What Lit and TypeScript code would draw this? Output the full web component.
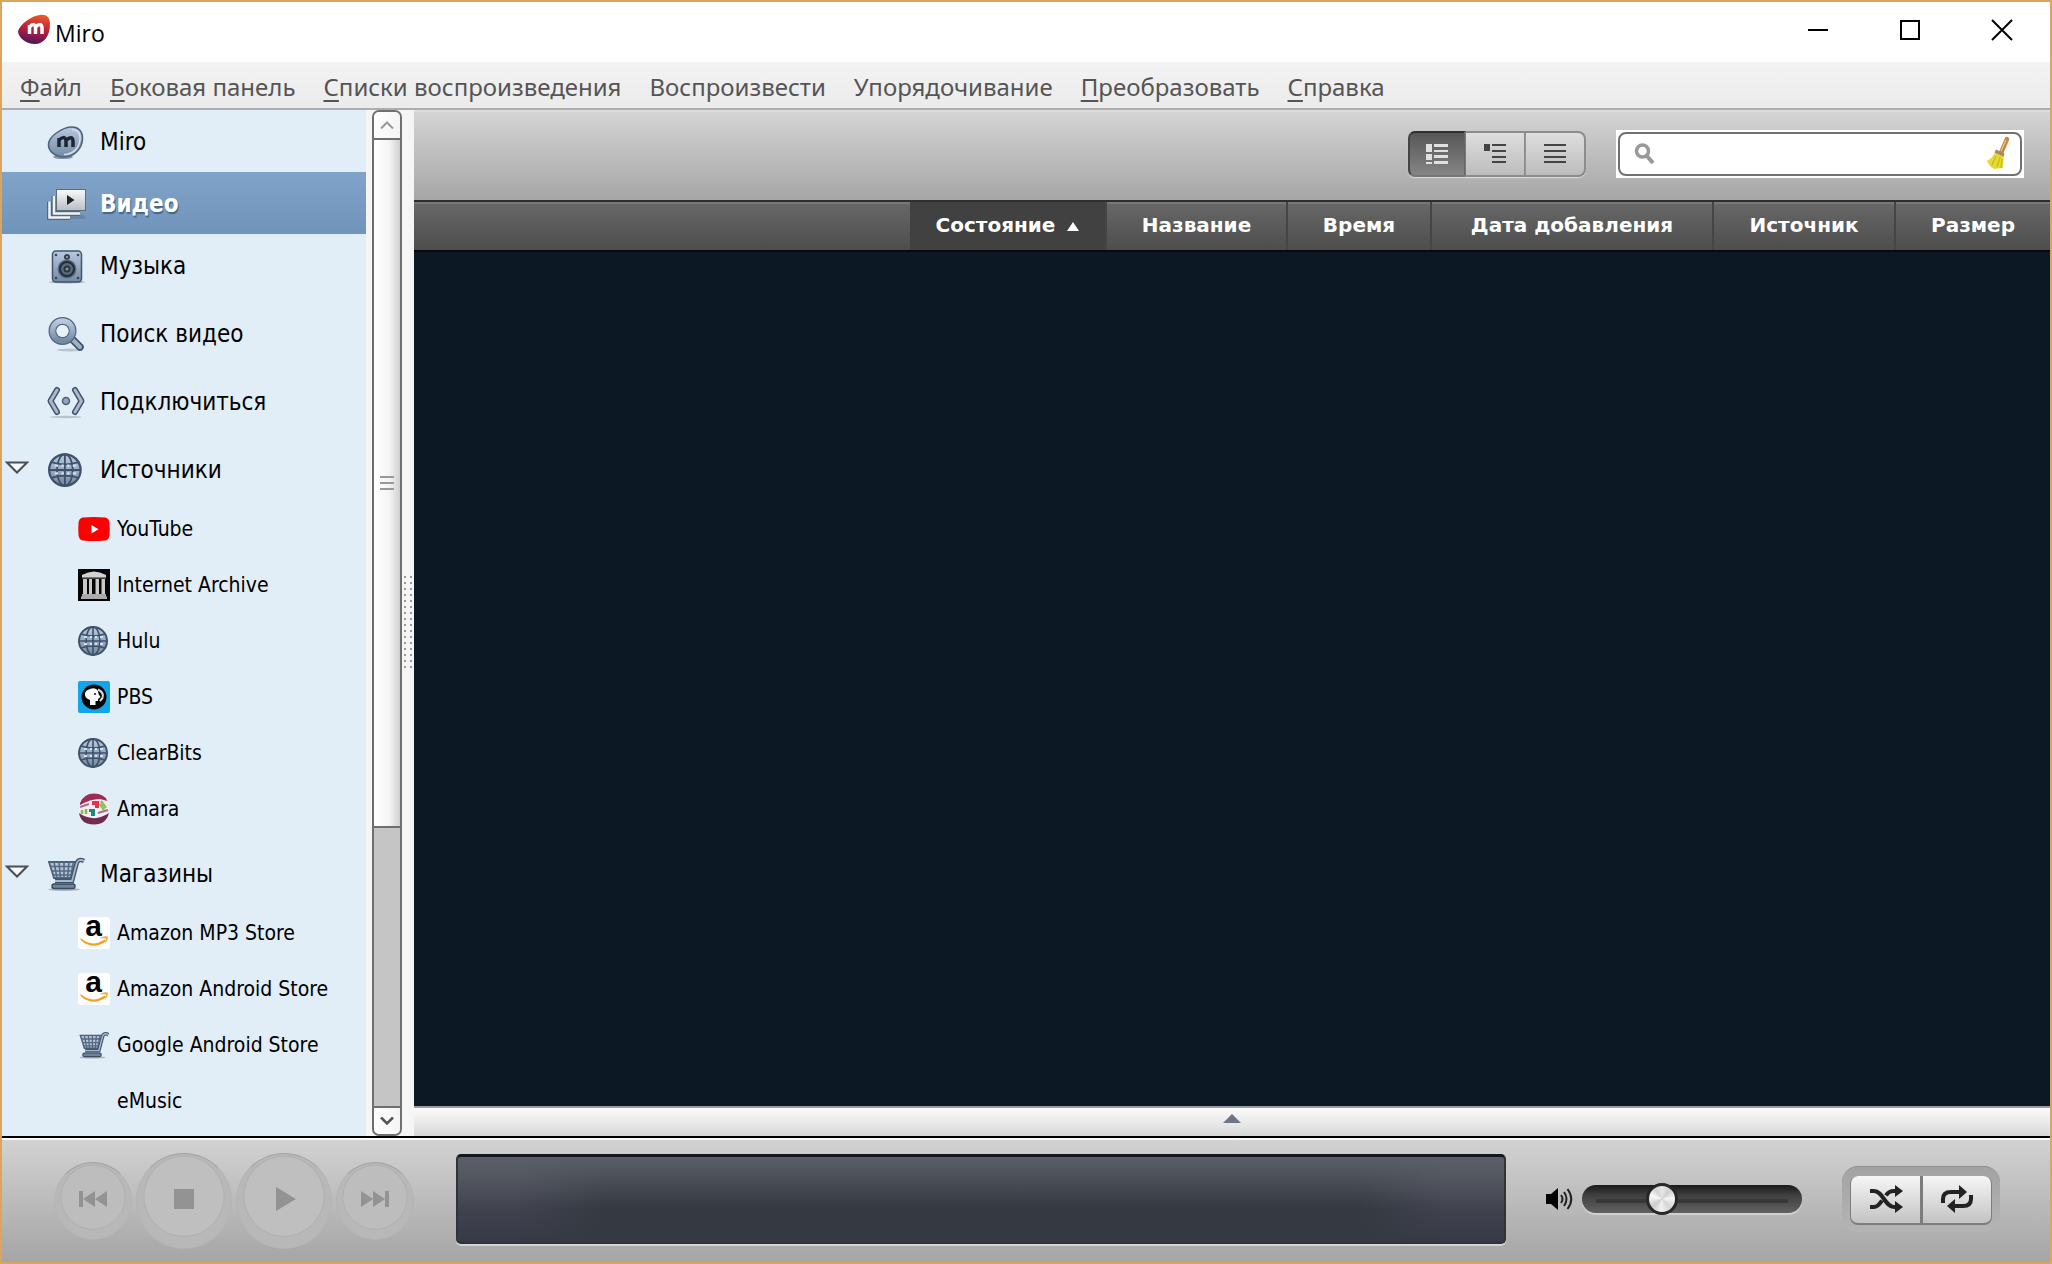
import { LitElement, html, css, svg, nothing, TemplateResult } from "lit";
import { customElement, state } from "lit/decorators.js";
import { classMap } from "lit/directives/class-map.js";

const ICONS: Record<string, TemplateResult> = {
  miro: html`<svg viewBox="0 0 40 40" width="40" height="40" aria-hidden="true">
    <ellipse cx="17" cy="35" rx="10" ry="2" fill="#5d6f86" opacity=".7"/>
    <path d="M26 5C32 5 37 9 36.500 17C36 27 28 35 18 35C9 35 2 29 2.500 22C3 14 17 5 26 5Z" fill="url(#steel)" stroke="#4d6078" stroke-width="1.500"/>
    <path d="M26 7.500C31 7.500 34.500 11 34 17C33.500 26 27 32.500 18 32.500" fill="none" stroke="#d5e0ee" stroke-width="1.500"/>
    <path d="M13 25V16M13 18.500Q17.500 13 20 18V25M20 18.500Q26 13 27 18.500V25" fill="none" stroke="#1d2530" stroke-width="3.500"/>
  </svg>`,
  video: html`<svg viewBox="0 0 40 40" width="40" height="40" aria-hidden="true">
    <path d="M6 35H40L38 31H9Z" fill="#5b7898" opacity=".6"/>
    <path d="M3.500 17.500V33.500H24" fill="none" stroke="#53697f" stroke-width="5"/>
    <path d="M3.500 17.500V33.500H24" fill="none" stroke="#f1f4f8" stroke-width="2.500"/>
    <path d="M8 12V29.500H34" fill="none" stroke="#53697f" stroke-width="5"/>
    <path d="M8 12V29.500H34" fill="none" stroke="#f1f4f8" stroke-width="2.500"/>
    <rect x="10.500" y="5.500" width="29" height="21" fill="url(#paper)" stroke="#5c6d80"/>
    <path d="M21 11V21L28.500 16Z" fill="#1f242b"/>
  </svg>`,
  music: html`<svg viewBox="0 0 40 40" width="40" height="40" aria-hidden="true">
    <ellipse cx="21" cy="36" rx="18" ry="1.500" fill="#8b9aad" opacity=".7"/>
    <rect x="6.500" y="5" width="29" height="31" rx="3.500" fill="url(#steel)" stroke="#43546a" stroke-width="1.500"/>
    <circle cx="10" cy="9" r="1.300" fill="#3c4857"/><circle cx="32" cy="9" r="1.300" fill="#3c4857"/><circle cx="10" cy="32" r="1.300" fill="#3c4857"/><circle cx="32" cy="32" r="1.300" fill="#3c4857"/>
    <circle cx="21" cy="11" r="3" fill="#39424d"/><circle cx="21" cy="11" r="1" fill="#a7b4c4"/>
    <circle cx="21" cy="23" r="9.500" fill="#586b82"/><circle cx="21" cy="23" r="7" fill="none" stroke="#252c34" stroke-width="2"/>
    <circle cx="21" cy="23" r="3.500" fill="#2d343d"/><circle cx="21" cy="23" r="1.500" fill="#8796a8"/>
  </svg>`,
  search: html`<svg viewBox="0 0 40 40" width="40" height="40" aria-hidden="true">
    <ellipse cx="24" cy="36" rx="13" ry="1.500" fill="#8b9aad" opacity=".5"/>
    <path d="M25 24L34 33" stroke="#41536a" stroke-width="7.500" stroke-linecap="round"/>
    <path d="M26 25L34 33" stroke="#9fb1c7" stroke-width="4" stroke-linecap="round"/>
    <circle cx="16.500" cy="17" r="10" fill="none" stroke="#53667f" stroke-width="8"/>
    <circle cx="16.500" cy="17" r="10" fill="none" stroke="url(#steel)" stroke-width="5.500"/>
    <circle cx="16.500" cy="17" r="6" fill="#e8f0f8"/>
  </svg>`,
  connect: html`<svg viewBox="0 0 40 40" width="40" height="40" aria-hidden="true">
    <ellipse cx="20" cy="35" rx="16" ry="1.200" fill="#8b9aad" opacity=".5"/>
    <g fill="none" stroke-linecap="round" stroke-linejoin="round">
      <path d="M11 8L4.500 19L11 30M29 8L35.500 19L29 30" stroke="#43546a" stroke-width="6"/>
      <path d="M11 8L4.500 19L11 30M29 8L35.500 19L29 30" stroke="#a9bace" stroke-width="3"/>
    </g>
    <circle cx="20" cy="19" r="3.500" fill="#91a4bb" stroke="#4d6078" stroke-width="1.500"/>
  </svg>`,
  globe: html`<svg viewBox="0 0 32 32" width="36" height="36" aria-hidden="true">
    <circle cx="15" cy="16" r="14" fill="url(#steel)" stroke="#40526a" stroke-width="2"/>
    <g fill="none" stroke="#3f5169" stroke-width="1.600">
      <path d="M15 2V30M1 16H29M3 9Q15 13 27 9M3 23Q15 19 27 23"/>
      <ellipse cx="15" cy="16" rx="7" ry="14"/>
    </g>
    <path d="M6 12H9M12 12H14M17 12H19M6 19H9M12 19H14M17 19H19M22 12H25M22 19H25" stroke="#d4e0ed" stroke-width="2"/>
  </svg>`,
  cart: html`<svg viewBox="0 0 40 36" width="40" height="36" aria-hidden="true">
    <ellipse cx="18" cy="33.500" rx="16" ry="1.500" fill="#8b9aad" opacity=".7"/>
    <path d="M3 6H31L26 22H8Z" fill="#b4c4d8" stroke="#4d6078" stroke-width="1.800"/>
    <path d="M4 10.500H29.500M6 15H28M7 19H27M8 6L11 22M13 6L14.500 22M18 6V22M23 6L21.500 22M27.500 6L24.500 22" stroke="#556982" stroke-width="1.600"/>
    <path d="M38 5Q32 2 30.500 8L26 25H9" fill="none" stroke="#43546a" stroke-width="4.500"/>
    <path d="M38 5Q32 2 30.500 8L26 25H9" fill="none" stroke="#a5b7cc" stroke-width="1.800"/>
    <rect x="6" y="28" width="23" height="4.500" rx="2" fill="#6f839b" stroke="#3a4b60" stroke-width="1.400"/>
  </svg>`,
  youtube: html`<svg viewBox="0 0 32 32" width="32" height="32" aria-hidden="true">
    <path d="M5 4.500Q16 3.500 27 4.500Q31 5 31.500 10Q32 16 31.500 22Q31 27 27 27.500Q16 28.500 5 27.500Q1 27 .5 22Q0 16 .5 10Q1 5 5 4.500Z" fill="#fe0000"/>
    <path d="M13.500 12V20.500L20.500 16.200Z" fill="#fff"/>
  </svg>`,
  archive: html`<svg viewBox="0 0 32 32" width="32" height="32" aria-hidden="true">
    <rect width="32" height="32" fill="#050505"/>
    <path d="M4 6Q16 -1 28 6V8.500H4Z" fill="#d2d2d2"/><path d="M4 8H28V9.500H4Z" fill="#777"/>
    <path d="M5 10H9V25H5ZM11 10H14V25H11ZM17.500 10H21V25H17.500ZM23.500 10H27V25H23.500Z" fill="#c9c9c9"/>
    <path d="M4 25H28V27.500H29V30H3V27.500H4Z" fill="#aaa"/>
  </svg>`,
  pbs: html`<svg viewBox="0 0 32 32" width="32" height="32" aria-hidden="true">
    <rect width="32" height="32" rx="2" fill="#12a5e8"/>
    <circle cx="16" cy="16" r="12.500" fill="#070707"/>
    <path d="M12 8Q18 6 20 10L20.500 13L22.500 16L20 18V20H17.500V24H12V19Q6 17 7 12Q8 9 12 8Z" fill="#fff"/>
    <path d="M20 8.500Q26.500 12 24.500 17L22 20" fill="none" stroke="#ddd" stroke-width="2"/>
    <circle cx="17" cy="13" r="1" fill="#111"/>
  </svg>`,
  amara: html`<svg viewBox="0 0 32 32" width="32" height="32" aria-hidden="true">
    <circle cx="16" cy="16" r="15.500" fill="#f4eef1"/>
    <path d="M2 10Q6 .5 16 .5Q26 .5 29.500 8L22 6Q12 6 2 12Z" fill="#9d2b55"/>
    <path d="M1 20Q3 31.500 16 31.500Q28 31.500 31 20Q22 26 14 25Q6 24 1 20Z" fill="#6f2b50"/>
    <path d="M14 8H21V15H17V12H14Z" fill="#e5304f"/><path d="M23 8L28 15M22 11L26 17" stroke="#8bbf5f" stroke-width="2.500"/>
    <path d="M11 16H17V23H13V19H11Z" fill="#168b80"/><path d="M4 17V21M8 16V21" stroke="#86b95a" stroke-width="2.500"/>
    <path d="M2 14L11 11M20 20L30 17" stroke="#a3738b" stroke-width="2"/>
  </svg>`,
  amazon: html`<svg class="free" viewBox="0 0 32 32" width="32" height="32" aria-hidden="true">
    <rect width="32" height="32" rx="3" fill="#fff"/>
    <text class="a" x="15.500" y="19" text-anchor="middle">a</text>
    <path d="M2.500 21Q14 31 26.500 22.500L28.500 24Q15 34 2.500 23Z" fill="#f6a01f"/>
    <path d="M22.500 20.500Q30 17.500 30 20.500Q30 23.500 27 26.500Q28.500 22 27.500 21.500Q26 20.800 22.500 21.500Z" fill="#f6b04a"/>
  </svg>`,
};

interface Entry { id: string; label: string; icon?: string; children?: Entry[]; spaced?: boolean; }

const ENTRIES: Entry[] = [
  { id: "miro", label: "Miro", icon: "miro" },
  { id: "video", label: "Видео", icon: "video" },
  { id: "music", label: "Музыка", icon: "music" },
  { id: "search", label: "Поиск видео", icon: "search", spaced: true },
  { id: "connect", label: "Подключиться", icon: "connect", spaced: true },
  {
    id: "sources", label: "Источники", icon: "globe", spaced: true, children: [
      { id: "youtube", label: "YouTube", icon: "youtube" },
      { id: "archive", label: "Internet Archive", icon: "archive" },
      { id: "hulu", label: "Hulu", icon: "globe" },
      { id: "pbs", label: "PBS", icon: "pbs" },
      { id: "clearbits", label: "ClearBits", icon: "globe" },
      { id: "amara", label: "Amara", icon: "amara" },
    ],
  },
  {
    id: "stores", label: "Магазины", icon: "cart", spaced: true, children: [
      { id: "amazon-mp3", label: "Amazon MP3 Store", icon: "amazon" },
      { id: "amazon-android", label: "Amazon Android Store", icon: "amazon" },
      { id: "google-android", label: "Google Android Store", icon: "cart" },
      { id: "emusic", label: "eMusic" },
    ],
  },
];

const MENUS: [string, string][] = [
  ["Ф", "айл"], ["Б", "оковая панель"], ["С", "писки воспроизведения"], ["", "Воспроизвести"],
  ["", "Упорядочивание"], ["П", "реобразовать"], ["С", "правка"],
];

@customElement("miro-sidebar")
class MiroSidebar extends LitElement {
  @state() private selected = "video";
  @state() private closed: string[] = [];

  static styles = css`
    :host { display: flex; width: 412px; flex: none; min-height: 0; background: #f5f5f5; font-family: "DejaVu Sans Condensed", "DejaVu Sans", sans-serif; }
    .defs { position: absolute; width: 0; height: 0; }
    .list { width: 364px; overflow: hidden; background: #e1edf7; }
    .row { display: flex; align-items: center; height: 62px; color: #000; }
    .row.spaced { margin-top: 6px; }
    .link { display: flex; align-items: center; flex: 1; height: 100%; box-sizing: border-box; padding-top: 2px; gap: 14px; font-size: 24px; color: inherit; text-decoration: none; white-space: nowrap; }
    .row.selected { background: linear-gradient(#80a4c9, #7195ba); color: #fff; font-weight: bold; text-shadow: 1px 2px 1px #45658a; }
    .fold { width: 44px; height: 32px; padding: 0 0 0 3px; border: 0; background: none; text-align: left; flex: none; }
    .pad { width: 44px; flex: none; }
    .icon { display: flex; justify-content: center; width: 40px; flex: none; }
    .sub { height: 56px; padding-left: 76px; }
    .sub .link { font-size: 21px; gap: 7px; }
    .sub .icon { width: 32px; }
    .sub .icon svg { width: 32px; }
    .free { overflow: visible; }
    .a { font: bold 30px/32px "Liberation Sans", Arial, sans-serif; fill: #000; }
    .scroll { display: flex; flex-direction: column; width: 26px; margin-left: 6px; border: 2px solid #6f6f6f; border-radius: 7px; overflow: hidden; background: #c5c5c5; }
    .step { height: 26px; padding: 0; border: 0; display: grid; place-items: center; background: linear-gradient(90deg, #fff, #f4f4f4); flex: none; }
    .thumb { display: grid; place-items: center; flex: 712; border: solid #6f6f6f; border-width: 2px 0; background: linear-gradient(90deg, #fff 10%, #f3f3f3 60%, #cfcfcf); }
    .trough { flex: 288; border-bottom: 2px solid #6f6f6f; }
    .ridges { width: 14px; height: 14px; background: repeating-linear-gradient(#999 0 2px, transparent 2px 6px); }
    .split { display: grid; place-items: center; flex: 1; padding-bottom: 4px; }
    .dots { width: 12px; height: 94px; background: radial-gradient(circle, #999 1px, transparent 1px) 0 0 / 6px 6px; }
  `;

  private toggle(id: string) {
    this.closed = this.closed.includes(id) ? this.closed.filter(c => c !== id) : [...this.closed, id];
  }

  private row(e: Entry, sub = false): TemplateResult {
    const open = !this.closed.includes(e.id);
    const selected = this.selected === e.id;
    return html`
      <div class=${classMap({ row: true, sub, selected, spaced: !!e.spaced })}>
        ${e.children ? html`<button class="fold" aria-label=${e.label} aria-expanded=${open} @click=${() => this.toggle(e.id)}>
          <svg width="24" height="14" viewBox="0 0 24 14" aria-hidden="true"><path d="M2 1.500H22L12 11.500Z" fill="#f4f8fb" stroke="#4a4f55" stroke-width="2"/></svg>
        </button>` : sub ? nothing : html`<span class="pad"></span>`}
        <a class="link" href="#${e.id}" aria-current=${selected ? "page" : "false"} @click=${() => { this.selected = e.id; }}>
          <span class="icon">${e.icon ? ICONS[e.icon] : nothing}</span>${e.label}
        </a>
      </div>
      ${e.children && open ? e.children.map(c => this.row(c, true)) : nothing}`;
  }

  render() {
    return html`
      <svg class="defs" aria-hidden="true"><defs>
        <linearGradient id="steel" x1="0" y1="0" x2="0" y2="1"><stop offset="0" stop-color="#b9cae0"/><stop offset="1" stop-color="#7389a3"/></linearGradient>
        <linearGradient id="paper" x1="0" y1="0" x2="0" y2="1"><stop offset="0" stop-color="#fafafa"/><stop offset="1" stop-color="#b9bec5"/></linearGradient>
      </defs></svg>
      <nav class="list">${ENTRIES.map(e => this.row(e))}</nav>
      <div class="scroll">
        <button class="step" aria-label="Вверх"><svg width="16" height="10" viewBox="0 0 16 10"><path d="M2 8.500L8 2.500L14 8.500" fill="none" stroke="#999" stroke-width="2"/></svg></button>
        <div class="thumb"><div class="ridges"></div></div>
        <div class="trough"></div>
        <button class="step" aria-label="Вниз"><svg width="16" height="10" viewBox="0 0 16 10"><path d="M2 1.500L8 7.500L14 1.500" fill="none" stroke="#555" stroke-width="2.500"/></svg></button>
      </div>
      <div class="split"><div class="dots"></div></div>`;
  }
}

const COLUMNS = [
  { label: "Состояние", cls: "c1" }, { label: "Название", cls: "c2" }, { label: "Время", cls: "c3" },
  { label: "Дата добавления", cls: "c4" }, { label: "Источник", cls: "c5" }, { label: "Размер", cls: "c6" },
];

const VIEWS = [
  { label: "Обычный вид", icon: svg`<path d="M0 0H6V8H0ZM0 10H6V16H0ZM0 18H6V20H0ZM8 0H22V3H8ZM8 6H22V8H8ZM8 11H22V14H8ZM8 17H22V20H8Z"/>` },
  { label: "Гибридный вид", icon: svg`<path d="M0 0H6V7H0ZM8 0H22V2H8ZM8 6H22V8H8ZM8 12H22V14H8ZM8 17H22V19H8Z"/>` },
  { label: "Список", icon: svg`<path d="M0 0H22V2H0ZM0 6H22V8H0ZM0 12H22V14H0ZM0 17H22V19H0Z"/>` },
];

@customElement("miro-library")
class MiroLibrary extends LitElement {
  @state() private view = 0;

  static styles = css`
    :host { display: flex; flex-direction: column; flex: 1; min-width: 0; }
    .toolbar { display: flex; align-items: center; justify-content: flex-end; gap: 30px; height: 90px; padding: 0 26px 4px 0; box-sizing: border-box; background: linear-gradient(#d4d4d4, #a6a6a6); border-top: 2px solid #dcdcdc; }
    .views { display: flex; }
    .view { width: 60px; height: 46px; padding: 0; border: 2px solid #8c8c8c; border-left-width: 0; background: linear-gradient(#dedede, #bcbcbc); fill: #444; display: grid; place-items: center; box-shadow: 0 1px 1px #ddd; }
    .view:first-child { border-radius: 7px 0 0 7px; border-left-width: 2px; width: 58px; }
    .view:last-child { border-radius: 0 8px 8px 0; }
    .view.on { background: linear-gradient(#575757, #858585); border-color: #2f2f2f #666 #777 #444; fill: #e0e0e0; }
    .search { display: flex; align-items: center; width: 400px; height: 40px; border: 2px solid #717171; border-radius: 8px; background: #fff; }
    .frame { padding: 2px; background: #fff; }
    .glass { margin-left: 14px; flex: none; }
    .query { flex: 1; min-width: 0; border: 0; outline: 0; padding: 0 8px; background: none; font: 20px "DejaVu Sans", sans-serif; }
    .clear { width: 24px; height: 38px; padding: 0; border: 0; margin-right: 10px; background: none; }
    .head { width: 100%; border-collapse: separate; border-spacing: 0; table-layout: fixed; border-top: 2px solid #2e2e2e; border-bottom: 2px solid #070a0f; background: linear-gradient(#787878 0 2px, #676767 2px, #4d4d4d); }
    .head th { height: 48px; padding: 0 0 3px; box-sizing: border-box; }
    .head th + th { border-left: 2px solid #454545; }
    .c1 { width: 195px; background: #414141; } .c2 { width: 181px; } .c3 { width: 144px; } .c4 { width: 282px; } .c5 { width: 182px; } .c6 { width: 156px; }
    .sort { display: inline-flex; align-items: center; gap: 12px; padding: 0; border: 0; background: none; color: #fff; font: bold 20px/28px "DejaVu Sans", sans-serif; white-space: nowrap; }
    .canvas { flex: 1; background: #0c1925; }
    .drawer { display: grid; place-items: center; height: 30px; padding: 0 0 6px; border: 0; border-top: 2px solid #9a9ea8; background: linear-gradient(#fbfcfa, #d8d8d8); }
  `;

  render() {
    return html`
      <div class="toolbar">
        <div class="views">${VIEWS.map((v, i) => html`
          <button class=${classMap({ view: true, on: this.view === i })} aria-label=${v.label} aria-pressed=${this.view === i} @click=${() => { this.view = i; }}>
            <svg width="22" height="20" viewBox="0 0 22 20" aria-hidden="true">${v.icon}</svg>
          </button>`)}
        </div>
        <div class="frame"><div class="search">
          <svg class="glass" width="22" height="24" viewBox="0 0 22 24" aria-hidden="true"><circle cx="8.500" cy="9" r="6" fill="none" stroke="#999" stroke-width="3.500"/><path d="M12.500 13.500L19 21" stroke="#999" stroke-width="4"/></svg>
          <input class="query" type="text" aria-label="Поиск">
          <button class="clear" aria-label="Очистить"><svg width="24" height="34" viewBox="0 0 24 34" aria-hidden="true">
            <path d="M21 3L15 17" stroke="#c08a42" stroke-width="4.500" stroke-linecap="round"/><path d="M20 4L15 15" stroke="#e5bd83" stroke-width="1.500"/>
            <path d="M10 14L18 18L17 32L8 33Q3 30 1 25Q7 22 10 14Z" fill="#e8d935"/><path d="M10 20L6 29M14 21L11 31M16 23L15 32" stroke="#cdbf1c" stroke-width="1.500"/>
            <path d="M10 13.500L18.500 17.500L17.500 20.500L8.500 16.500Z" fill="#a08a68"/>
          </svg></button>
        </div></div>
      </div>
      <table class="head"><thead><tr><td></td>
        ${COLUMNS.map((c, i) => html`<th class=${c.cls} scope="col"><button class="sort">${c.label}${i === 0 ? html`<svg width="12" height="12" viewBox="0 0 12 12" aria-hidden="true"><path d="M6 3L12 12H0Z" fill="#fff"/></svg>` : nothing}</button></th>`)}
      </tr></thead></table>
      <div class="canvas"></div>
      <button class="drawer" aria-label="Подробности"><svg width="18" height="10" viewBox="0 0 18 10" aria-hidden="true"><path d="M9 0L18 9H0Z" fill="#6e7684"/></svg></button>`;
  }
}

@customElement("miro-player")
class MiroPlayer extends LitElement {
  static styles = css`
    :host { display: flex; align-items: center; height: 122px; box-sizing: content-box; flex: none; padding: 0 50px 0 52px; border-top: 2px solid #fafafa; background: linear-gradient(#d2d2d2, #a5a5a5); box-shadow: 0 -2px #000; }
    .bar { display: flex; align-items: center; flex: 1; padding-bottom: 5px; }
    .transport { display: flex; align-items: center; gap: 4px; margin-right: 42px; padding-top: 4px; }
    .round { display: grid; place-items: center; width: 78px; height: 78px; padding: 0 0 3px; box-sizing: border-box; border: 1px solid #b4b4b4; border-top-color: #a2a2a2; border-radius: 50%; background: radial-gradient(circle at 50% 45%, #bdbdbd 0 31px, #b0b0b0 32px, #b8b8b8 33px); fill: #939393; }
    .round.large { width: 96px; height: 96px; background: radial-gradient(circle at 50% 45%, #bfbfbf 0 39px, #b0b0b0 40px, #b8b8b8 41px); }
    .screen { flex: 1; height: 90px; box-sizing: border-box; border: 2px solid #303338; border-top: 3px solid #14171b; border-radius: 5px; background: linear-gradient(#5a5e66, #5a5e6600 60%), linear-gradient(90deg, #373b4700 6%, #353941 14% 86%, #373b4700 94%), linear-gradient(#4d505b, #373a46); box-shadow: 0 2px #d3d3d3; }
    .speaker { margin: 0 8px 0 40px; flex: none; }
    .volume { appearance: none; width: 220px; height: 33px; margin: 0 40px 0 0; background: none; }
    .volume::-webkit-slider-runnable-track { height: 28px; border-radius: 14px; background: linear-gradient(#383838 0 0) center 14px / 192px 4px no-repeat, linear-gradient(#191919, #3e3e3e 35%, #626262); box-shadow: 0 2px #d0d0d0; }
    .volume::-webkit-slider-thumb { appearance: none; width: 32px; height: 32px; margin-top: -2px; box-sizing: border-box; border: 3px solid #272727; border-radius: 50%; background: conic-gradient(#e8e8e8, #cfcfcf 12%, #f6f6f6 24%, #d5d5d5 38%, #f2f2f2 52%, #cacaca 64%, #fafafa 80%, #d3d3d3 90%, #e8e8e8); }
    .modes { display: flex; padding: 9px 8px 7px; border-radius: 16px; border-top: 1px solid #8e8e8e; background: linear-gradient(#a3a3a3, #b4b4b4); }
    .mode { display: grid; place-items: center; width: 71px; height: 49px; padding: 0; border: solid #7d7d7d; border-width: 0 1px 2px; background: linear-gradient(#f6f6f6, #c3c3c3); }
    .mode:first-child { border-radius: 8px 0 0 8px; }
    .mode:last-child { border-radius: 0 8px 8px 0; border-left-width: 2px; }
  `;

  render() {
    return html`<div class="bar">
      <div class="transport">
        <button class="round" aria-label="Назад"><svg width="28" height="18" viewBox="0 0 28 18"><path d="M0 1H4V17H0ZM16 1V17L4 9ZM28 1V17L16 9Z"/></svg></button>
        <button class="round large" aria-label="Стоп"><svg width="22" height="22" viewBox="0 0 22 22"><path d="M1 1H21V21H1Z"/></svg></button>
        <button class="round large" aria-label="Воспроизвести"><svg width="24" height="24" viewBox="0 0 24 24"><path d="M4 0V24L24 12Z"/></svg></button>
        <button class="round" aria-label="Вперёд"><svg width="28" height="18" viewBox="0 0 28 18"><path d="M24 1H28V17H24ZM0 1V17L12 9ZM12 1V17L24 9Z"/></svg></button>
      </div>
      <div class="screen"></div>
      <svg class="speaker" width="28" height="26" viewBox="0 0 28 26" aria-hidden="true">
        <path d="M0 8H5L12 2V24L5 18H0Z"/><path d="M15 9Q18 13 15 17M18 6Q23 13 18 20M21.500 3Q29 13 21.500 23" fill="none" stroke="#222" stroke-width="2"/>
      </svg>
      <input class="volume" type="range" min="0" max="100" value="34" aria-label="Громкость">
      <div class="modes">
        <button class="mode" aria-label="Перемешать"><svg width="34" height="28" viewBox="0 0 34 28">
          <path d="M1 6H5C14 6 16 22 25 22H27M1 22H5C9 22 11 18.500 13 15.500M17 10.500C19 7 21 6 25 6H27" fill="none" stroke="#222" stroke-width="4"/>
          <path d="M26 0L34 6L26 12ZM26 16L34 22L26 28Z" fill="#222"/></svg></button>
        <button class="mode" aria-label="Повторять"><svg width="34" height="30" viewBox="0 0 34 30">
          <path d="M3 19V15Q3 8 11 8H21M31 11V15Q31 22 23 22H13" fill="none" stroke="#222" stroke-width="4"/>
          <path d="M19 1L27 8L19 15ZM15 15L7 22L15 29Z" fill="#222"/></svg></button>
      </div>
    </div>`;
  }
}

@customElement("app-root")
class AppRoot extends LitElement {
  static styles = css`
    :host { display: flex; flex-direction: column; height: 100vh; min-height: 600px; box-sizing: border-box; border: 2px solid #dba45f; background: #fff; }
    .title { display: flex; align-items: center; height: 60px; box-sizing: border-box; flex: none; padding: 0 2px 4px 16px; }
    .name { flex: 1; margin: 5px 0 0 5px; font: 23px/30px "Open Sans", sans-serif; color: #000; }
    .win { display: grid; place-items: center; width: 92px; height: 56px; padding: 0; border: 0; background: none; }
    .menu { display: flex; align-items: center; gap: 28px; height: 46px; flex: none; padding-left: 18px; background: linear-gradient(#f3f3f3, #ebebeb); border-bottom: 2px solid #adadad; }
    .item { padding: 3px 0 0; border: 0; background: none; color: #555; font: 24px/32px "Noto Sans", sans-serif; white-space: nowrap; }
    .key { text-decoration: underline; text-underline-offset: 4px; text-decoration-thickness: 2px; }
    .body { display: flex; flex: 1; min-height: 0; padding-bottom: 2px; }
  `;

  render() {
    return html`
      <header class="title">
        <svg width="32" height="32" viewBox="0 0 32 32" aria-hidden="true">
          <defs><linearGradient id="logo" x1=".6" y1="0" x2=".4" y2="1"><stop offset="0" stop-color="#e85a2a"/><stop offset=".45" stop-color="#c41f38"/><stop offset="1" stop-color="#4a1560"/></linearGradient></defs>
          <path d="M22 1C28 0 32 3 32 10C32 22 26 30 17 30C8 30 1 24 0 18C1 11 13 2 22 1Z" fill="url(#logo)"/>
          <path d="M11.500 20V11M11.500 13Q16 8 17.500 13V20M17.500 13Q23 8 24 13V20" fill="none" stroke="#fff" stroke-width="3.500"/>
        </svg>
        <span class="name">Miro</span>
        <button class="win" aria-label="Свернуть"><svg width="22" height="22" viewBox="0 0 22 22"><path d="M1 11H21" stroke="#000" stroke-width="2"/></svg></button>
        <button class="win" aria-label="Развернуть"><svg width="22" height="22" viewBox="0 0 22 22"><path d="M2 2H20V20H2Z" fill="none" stroke="#000" stroke-width="2"/></svg></button>
        <button class="win" aria-label="Закрыть"><svg width="22" height="22" viewBox="0 0 22 22"><path d="M1 1L21 21M21 1L1 21" stroke="#000" stroke-width="2"/></svg></button>
      </header>
      <nav class="menu">${MENUS.map(([k, t]) => html`<button class="item"><span class="key">${k}</span>${t}</button>`)}</nav>
      <main class="body"><miro-sidebar></miro-sidebar><miro-library></miro-library></main>
      <miro-player></miro-player>`;
  }
}
